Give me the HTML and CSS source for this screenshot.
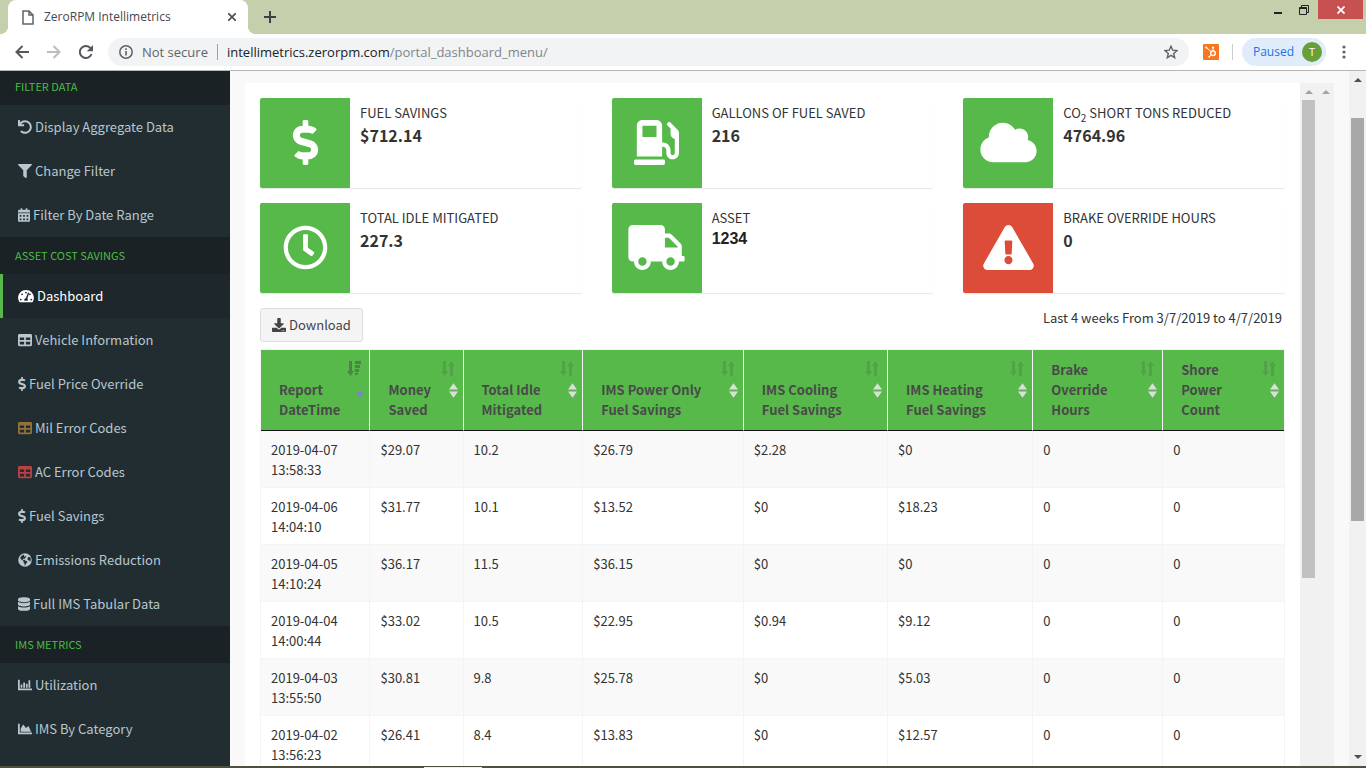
FILE: index.html
```html
<!DOCTYPE html>
<html lang="en">
<head>
<meta charset="utf-8">
<title>ZeroRPM Intellimetrics</title>
<link rel="stylesheet" href="styles.css">
</head>
<body>
<svg class="sprite" aria-hidden="true">
  <symbol id="dollar" viewBox="0 0 288 512"><path d="M209.2 233.4l-108-31.6C88.7 198.2 80 186.5 80 173.5c0-16.3 13.2-29.5 29.5-29.5h66.3c12.2 0 24.2 3.7 34.2 10.5 6.1 4.1 14.3 3.1 19.5-2l34.8-34c7.1-6.9 6.1-18.4-1.8-24.5C238 74.8 207.4 64.1 176 64V16c0-8.8-7.2-16-16-16h-32c-8.8 0-16 7.2-16 16v48h-2.5C45.8 64-5.4 118.7.5 183.6c4.2 46.1 39.4 83.6 83.8 96.6l102.5 30c12.5 3.7 21.2 15.3 21.2 28.3 0 16.3-13.2 29.5-29.5 29.5h-66.3C100 368 88 364.3 78 357.5c-6.1-4.1-14.3-3.1-19.5 2l-34.8 34c-7.1 6.9-6.1 18.4 1.8 24.5 24.5 19.2 55.1 29.9 86.5 30v48c0 8.8 7.2 16 16 16h32c8.8 0 16-7.2 16-16v-48.2c46.6-.9 90.3-28.6 105.7-72.7 21.5-61.6-14.6-124.8-72.5-141.7z"/></symbol>
  <symbol id="pump" viewBox="0 0 512 512"><path d="M336 448H16c-8.8 0-16 7.2-16 16v32c0 8.8 7.2 16 16 16h320c8.8 0 16-7.2 16-16v-32c0-8.8-7.2-16-16-16zm157.2-340.7l-81-81c-6.2-6.2-16.4-6.2-22.6 0l-11.3 11.3c-6.2 6.2-6.2 16.4 0 22.6L416 97.9V160c0 28.1 20.9 51.3 48 55.2V376c0 13.2-10.8 24-24 24s-24-10.8-24-24v-32c0-48.6-39.4-88-88-88h-8V64c0-35.3-28.7-64-64-64H96C60.7 0 32 28.7 32 64v352h288V304h8c22.1 0 40 17.9 40 40v27.8c0 37.7 27 72 64.5 75.9 43 4.3 79.5-29.5 79.5-71.7V152.6c0-17-6.8-33.3-18.8-45.3zM256 192H96V64h160v128z"/></symbol>
  <symbol id="cloud" viewBox="0 0 640 512"><path d="M537.6 226.6c4.1-10.7 6.4-22.4 6.4-34.6 0-53-43-96-96-96-19.7 0-38.1 6-53.3 16.2C367 64.2 315.3 32 256 32c-88.4 0-160 71.6-160 160 0 2.7.1 5.4.2 8.1C40.2 219.8 0 273.2 0 336c0 79.5 64.5 144 144 144h368c70.7 0 128-57.3 128-128 0-61.9-44-113.6-102.4-125.4z"/></symbol>
  <symbol id="clock" viewBox="0 0 512 512"><path d="M256 8C119 8 8 119 8 256s111 248 248 248 248-111 248-248S393 8 256 8zm0 448c-110.5 0-200-89.5-200-200S145.5 56 256 56s200 89.5 200 200-89.5 200-200 200zm61.8-104.4l-84.9-61.7c-3.1-2.3-4.9-5.9-4.9-9.7V116c0-6.6 5.4-12 12-12h32c6.6 0 12 5.4 12 12v141.7l66.8 48.6c5.4 3.9 6.5 11.4 2.6 16.8L334.6 349c-3.9 5.3-11.4 6.5-16.8 2.6z"/></symbol>
  <symbol id="truck" viewBox="0 0 640 512"><path d="M624 352h-16V243.9c0-12.7-5.1-24.9-14.1-33.9L494 110.1c-9-9-21.2-14.1-33.9-14.1H416V48c0-26.5-21.5-48-48-48H48C21.5 0 0 21.5 0 48v320c0 26.5 21.5 48 48 48h16c0 53 43 96 96 96s96-43 96-96h128c0 53 43 96 96 96s96-43 96-96h48c8.8 0 16-7.2 16-16v-32c0-8.8-7.2-16-16-16zM160 464c-26.5 0-48-21.5-48-48s21.5-48 48-48 48 21.5 48 48-21.5 48-48 48zm320 0c-26.5 0-48-21.5-48-48s21.5-48 48-48 48 21.5 48 48-21.5 48-48 48zm80-208H416V144h44.1l99.9 99.9V256z"/></symbol>
  <symbol id="warning" viewBox="0 0 576 512"><path d="M569.517 440.013C587.975 472.007 564.806 512 527.94 512H48.054c-36.937 0-59.999-40.055-41.577-71.987L246.423 23.985c18.467-32.009 64.72-31.951 83.154 0l239.94 416.028zM288 354c-25.405 0-46 20.595-46 46s20.595 46 46 46 46-20.595 46-46-20.595-46-46-46zm-43.673-165.346l7.418 136c.347 6.364 5.609 11.346 11.982 11.346h48.546c6.373 0 11.635-4.982 11.982-11.346l7.418-136c.375-6.874-5.098-12.654-11.982-12.654h-63.383c-6.884 0-12.356 5.78-11.981 12.654z"/></symbol>
  <symbol id="undo" viewBox="0 0 512 512"><path d="M212.333 224.333H12c-6.627 0-12-5.373-12-12V12C0 5.373 5.373 0 12 0h48c6.627 0 12 5.373 12 12v78.112C117.773 39.279 184.26 7.47 258.175 8.007c136.906.994 246.448 111.623 246.157 248.532C504.041 393.258 393.12 504 256.333 504c-64.089 0-122.496-24.313-166.51-64.215-5.099-4.622-5.334-12.554-.467-17.42l33.967-33.967c4.474-4.474 11.662-4.717 16.401-.525C170.76 415.336 211.58 432 256.333 432c97.268 0 176-78.716 176-176 0-97.267-78.716-176-176-176-58.496 0-110.28 28.476-142.274 72.333h98.274c6.627 0 12 5.373 12 12v48c0 6.627-5.373 12-12 12z"/></symbol>
  <symbol id="filter" viewBox="0 0 512 512"><path d="M487.976 0H24.028C2.71 0-8.047 25.866 7.058 40.971L192 225.941V432c0 7.831 3.821 15.17 10.237 19.662l80 55.98C298.02 518.69 320 507.493 320 487.98V225.941l184.947-184.97C520.021 25.896 509.338 0 487.976 0z"/></symbol>
  <symbol id="calendar" viewBox="0 0 448 512"><path fill-rule="evenodd" d="M400 64h-48V16c0-8.800-7.200-16-16-16h-32c-8.800 0-16 7.200-16 16v48H160V16c0-8.800-7.200-16-16-16h-32c-8.800 0-16 7.200-16 16v48H48C21.500 64 0 85.500 0 112v48h448v-48c0-26.500-21.500-48-48-48zM0 192v272c0 26.500 21.500 48 48 48h352c26.500 0 48-21.500 48-48V192zM64 256h64v64H64zM192 256h64v64h-64zM320 256h64v64h-64zM64 384h64v64H64zM192 384h64v64h-64zM320 384h64v64h-64z"/></symbol>
  <symbol id="gauge" viewBox="0 0 576 512"><path fill-rule="evenodd" d="M288 32C128.940 32 0 160.940 0 320c0 52.800 14.250 102.260 39.060 144.800 5.610 9.620 16.300 15.200 27.440 15.200h443c11.140 0 21.830-5.580 27.440-15.200C561.750 422.260 576 372.800 576 320c0-159.060-128.940-288-288-288zM288 96a32 32 0 1 1 0 64 32 32 0 1 1 0-64zM96 352a32 32 0 1 1 0 64 32 32 0 1 1 0-64zM144 160a32 32 0 1 1 0 64 32 32 0 1 1 0-64zM480 352a32 32 0 1 1 0 64 32 32 0 1 1 0-64zM432 160a32 32 0 1 1 0 64 32 32 0 1 1 0-64zM360 130l46 15-68 203c28 24 18 66 6 84H232c-20-40 0-92 50-98z"/></symbol>
  <symbol id="table" viewBox="0 0 512 512"><path d="M464 32H48C21.490 32 0 53.490 0 80v352c0 26.510 21.490 48 48 48h416c26.510 0 48-21.490 48-48V80c0-26.510-21.490-48-48-48zM224 416H64v-96h160v96zm0-160H64v-96h160v96zm224 160H288v-96h160v96zm0-160H288v-96h160v96z"/></symbol>
  <symbol id="globe" viewBox="0 0 512 512"><path fill-rule="evenodd" d="M256 8a248 248 0 1 1 0 496 248 248 0 1 1 0-496zM82 170l34 66 68 40 22 30-8 40 42 40v70l24-4 26-56 48-54-8-40-54-18-48-34-40 4-20-30 50-20 18 22 12-36 58-50-24-34-30 30-34-20 10-30-40-20-60 40zM380 150l-30 40-2 52 40 30 38-2 22 60 20-80-20-100z"/></symbol>
  <symbol id="database" viewBox="0 0 448 512"><path d="M448 73.143v45.714C448 159.143 347.667 192 224 192S0 159.143 0 118.857V73.143C0 32.857 100.333 0 224 0s224 32.857 224 73.143zM448 176v102.857C448 319.143 347.667 352 224 352S0 319.143 0 278.857V176c48.125 33.143 136.208 48.572 224 48.572S399.874 209.143 448 176zm0 160v102.857C448 479.143 347.667 512 224 512S0 479.143 0 438.857V336c48.125 33.143 136.208 48.572 224 48.572S399.874 369.143 448 336z"/></symbol>
  <symbol id="bars" viewBox="0 0 512 512"><path d="M12 64h40q12 0 12 12v308h436q12 0 12 12v40q0 12-12 12H12q-12 0-12-12V76q0-12 12-12zM108 240h40q12 0 12 12v100H96V252q0-12 12-12zM204 160h40q12 0 12 12v180h-64V172q0-12 12-12zM300 208h40q12 0 12 12v132h-64V220q0-12 12-12zM396 80h40q12 0 12 12v260h-64V92q0-12 12-12z"/></symbol>
  <symbol id="area" viewBox="0 0 512 512"><path d="M500 384c6.600 0 12 5.400 12 12v40c0 6.600-5.400 12-12 12H12c-6.600 0-12-5.400-12-12V76c0-6.600 5.400-12 12-12h40c6.600 0 12 5.400 12 12v308h436zM372.700 159.500L288 216l-85.300-113.700c-5.100-6.800-15.500-6.300-19.900 1L96 248v104h384l-89.900-187.800c-3.200-6.500-11.400-8.700-17.400-4.700z"/></symbol>
  <symbol id="download" viewBox="0 0 512 512"><path d="M216 0h80c13.300 0 24 10.700 24 24v168h87.700c17.800 0 26.700 21.500 14.100 34.100L269.700 378.300c-7.500 7.500-19.800 7.500-27.300 0L90.100 226.100c-12.600-12.600-3.700-34.100 14.100-34.100H192V24c0-13.300 10.700-24 24-24zm296 376v112c0 13.300-10.700 24-24 24H24c-13.300 0-24-10.700-24-24V376c0-13.300 10.700-24 24-24h146.700l49 49c20.100 20.100 52.500 20.100 72.600 0l49-49H488c13.300 0 24 10.700 24 24zm-124 88c0-11-9-20-20-20s-20 9-20 20 9 20 20 20 20-9 20-20zm64 0c0-11-9-20-20-20s-20 9-20 20 9 20 20 20 20-9 20-20z"/></symbol>
  <symbol id="sort" viewBox="0 0 14 15"><path d="M2 0h3v10h2l-3.500 5L0 10h2zM9 15h3V5h2l-3.500-5L7 5h2z"/></symbol>
  <symbol id="sorted" viewBox="0 0 14 15"><path d="M2 0h3v10h2l-3.500 5L0 10h2zM8 0h6v3H8zM8 4h5v3H8zM8 8h4v3H8zM8 12h3v2H8z"/></symbol>
  <symbol id="both" viewBox="0 0 10 16"><path d="M5 0l5 7H0zM0 9h10l-5 7z"/></symbol>
</svg>

<div class="window">
  <header class="tabstrip">
    <div class="tab">
      <svg class="page-icon" viewBox="0 0 12 15"><path d="M1 1h6l4 4v9H1zM7 1v4h4" fill="none" stroke="#5f6368" stroke-width="1.500"/></svg>
      <span class="tab-title">ZeroRPM Intellimetrics</span>
      <button class="plain" aria-label="Close tab"><svg class="tab-close" viewBox="0 0 8 8"><path d="M0 0l8 8M8 0L0 8" stroke="#4a4d51" stroke-width="1.600"/></svg></button>
    </div>
    <button class="plain new-tab" aria-label="New tab"><svg width="12" height="12" viewBox="0 0 12 12"><path d="M6 0v12M0 6h12" stroke="#3c4043" stroke-width="2"/></svg></button>
    <div class="window-buttons">
      <button class="plain" aria-label="Minimize"><svg width="10" height="12" viewBox="0 0 10 12"><path d="M1 8h8v2H1z" fill="#222"/></svg></button>
      <button class="plain" aria-label="Restore"><svg width="10" height="10" viewBox="0 0 10 10"><path d="M.5 2.500h7v7h-7zM.5 3.500h7M2.500 2V.5h7v7H8" fill="none" stroke="#222"/></svg></button>
      <button class="plain close" aria-label="Close"><svg width="8" height="8" viewBox="0 0 8 8"><path d="M.5 .5l7 7M7.500 .5l-7 7" stroke="#fff" stroke-width="1.800"/></svg></button>
    </div>
  </header>

  <div class="toolbar">
    <button class="plain" aria-label="Back"><svg width="14" height="14" viewBox="0 0 14 14"><path d="M14 7H1.500M7.500 1L1.500 7l6 6" fill="none" stroke="#55585d" stroke-width="2"/></svg></button>
    <button class="plain" aria-label="Forward"><svg width="14" height="14" viewBox="0 0 14 14"><path d="M0 7h12.500M6.500 1l6 6-6 6" fill="none" stroke="#bbbdbf" stroke-width="2"/></svg></button>
    <button class="plain" aria-label="Reload"><svg width="14" height="14" viewBox="0 0 14 14"><path d="M12.500 9A6 6 0 1 1 11.500 3.200" fill="none" stroke="#55585d" stroke-width="2"/><path d="M14 0v6.200H7.800z" fill="#55585d"/></svg></button>
    <div class="address">
      <svg width="14" height="14" viewBox="0 0 14 14"><circle cx="7" cy="7" r="6.200" fill="none" stroke="#5f6368" stroke-width="1.500"/><path d="M6.200 6h1.600v4.500H6.200zM6.200 3.300h1.600v1.600H6.200z" fill="#5f6368"/></svg>
      <span class="security">Not secure</span>
      <span class="url"><b>intellimetrics.zerorpm.com</b>/portal_dashboard_menu/</span>
      <button class="plain" aria-label="Bookmark"><svg width="14" height="14" viewBox="0 0 14 14"><path d="M7 1.200l1.700 4 4.300.4-3.300 2.800 1 4.300L7 10.400l-3.700 2.300 1-4.300L1 5.600l4.300-.4z" fill="none" stroke="#5f6368" stroke-width="1.400"/></svg></button>
    </div>
    <svg class="extension" viewBox="0 0 16 16"><rect width="16" height="16" rx="1" fill="#f8761f"/><circle cx="10" cy="9.200" r="2.300" fill="none" stroke="#fff" stroke-width="1.500"/><path d="M10 7V4M8.300 7.700L3.300 3.500M8.300 10.800L6.500 12.600" stroke="#fff"/><circle cx="10" cy="3.500" r="1.100" fill="#fff"/><circle cx="3.300" cy="3.500" r="1.100" fill="#fff"/><circle cx="6.300" cy="12.800" r="1" fill="#fff"/></svg>
    <span class="divider"></span>
    <button class="profile">Paused <span class="avatar">T</span></button>
    <button class="plain menu" aria-label="Menu"><svg width="4" height="14" viewBox="0 0 4 14"><g fill="#5f6368"><circle cx="2" cy="2" r="1.600"/><circle cx="2" cy="7" r="1.600"/><circle cx="2" cy="12" r="1.600"/></g></svg></button>
  </div>

  <div class="app">
    <nav class="sidebar">
      <h2 class="first">FILTER DATA</h2>
      <a href="#"><svg class="w14"><use href="#undo"/></svg>Display Aggregate Data</a>
      <a href="#"><svg class="w14"><use href="#filter"/></svg>Change Filter</a>
      <a href="#"><svg class="w12"><use href="#calendar"/></svg>Filter By Date Range</a>
      <h2>ASSET COST SAVINGS</h2>
      <a href="#" class="active"><svg class="w16"><use href="#gauge"/></svg>Dashboard</a>
      <a href="#"><svg class="w14"><use href="#table"/></svg>Vehicle Information</a>
      <a href="#"><svg class="w8"><use href="#dollar"/></svg>Fuel Price Override</a>
      <a href="#"><svg class="w14 amber"><use href="#table"/></svg>Mil Error Codes</a>
      <a href="#"><svg class="w14 red"><use href="#table"/></svg>AC Error Codes</a>
      <a href="#"><svg class="w8"><use href="#dollar"/></svg>Fuel Savings</a>
      <a href="#"><svg class="w14"><use href="#globe"/></svg>Emissions Reduction</a>
      <a href="#"><svg class="w12"><use href="#database"/></svg>Full IMS Tabular Data</a>
      <h2>IMS METRICS</h2>
      <a href="#"><svg class="w14"><use href="#bars"/></svg>Utilization</a>
      <a href="#"><svg class="w14"><use href="#area"/></svg>IMS By Category</a>
    </nav>

    <main class="content">
      <section class="panel">
        <div class="cards">
          <article class="card"><div class="card-icon"><svg><use href="#dollar"/></svg></div><div class="card-text"><h3>FUEL SAVINGS</h3><strong>$712.14</strong></div></article>
          <article class="card"><div class="card-icon"><svg><use href="#pump"/></svg></div><div class="card-text"><h3>GALLONS OF FUEL SAVED</h3><strong>216</strong></div></article>
          <article class="card"><div class="card-icon"><svg><use href="#cloud"/></svg></div><div class="card-text"><h3>CO<sub>2</sub> SHORT TONS REDUCED</h3><strong>4764.96</strong></div></article>
          <article class="card"><div class="card-icon"><svg><use href="#clock"/></svg></div><div class="card-text"><h3>TOTAL IDLE MITIGATED</h3><strong>227.3</strong></div></article>
          <article class="card"><div class="card-icon"><svg><use href="#truck"/></svg></div><div class="card-text"><h3>ASSET</h3><strong class="asset">1234</strong></div></article>
          <article class="card"><div class="card-icon alert"><svg><use href="#warning"/></svg></div><div class="card-text"><h3>BRAKE OVERRIDE HOURS</h3><strong>0</strong></div></article>
        </div>
        <div class="actions">
          <button class="download"><svg><use href="#download"/></svg>Download</button>
          <p>Last 4 weeks From 3/7/2019 to 4/7/2019</p>
        </div>
        <table>
          <colgroup><col class="c1"><col class="c2"><col class="c3"><col class="c4"><col class="c5"><col class="c6"><col class="c7"><col></colgroup>
          <thead>
            <tr>
              <th>Report<br>DateTime<svg class="sort on"><use href="#sorted"/></svg><i class="desc"></i></th>
              <th>Money<br>Saved<svg class="sort"><use href="#sort"/></svg><svg class="both"><use href="#both"/></svg></th>
              <th>Total Idle<br>Mitigated<svg class="sort"><use href="#sort"/></svg><svg class="both"><use href="#both"/></svg></th>
              <th>IMS Power Only<br>Fuel Savings<svg class="sort"><use href="#sort"/></svg><svg class="both"><use href="#both"/></svg></th>
              <th>IMS Cooling<br>Fuel Savings<svg class="sort"><use href="#sort"/></svg><svg class="both"><use href="#both"/></svg></th>
              <th>IMS Heating<br>Fuel Savings<svg class="sort"><use href="#sort"/></svg><svg class="both"><use href="#both"/></svg></th>
              <th>Brake<br>Override<br>Hours<svg class="sort"><use href="#sort"/></svg><svg class="both"><use href="#both"/></svg></th>
              <th>Shore<br>Power<br>Count<svg class="sort"><use href="#sort"/></svg><svg class="both"><use href="#both"/></svg></th>
            </tr>
          </thead>
          <tbody>
            <tr><td>2019-04-07<br>13:58:33</td><td>$29.07</td><td>10.2</td><td>$26.79</td><td>$2.28</td><td>$0</td><td>0</td><td>0</td></tr>
            <tr><td>2019-04-06<br>14:04:10</td><td>$31.77</td><td>10.1</td><td>$13.52</td><td>$0</td><td>$18.23</td><td>0</td><td>0</td></tr>
            <tr><td>2019-04-05<br>14:10:24</td><td>$36.17</td><td>11.5</td><td>$36.15</td><td>$0</td><td>$0</td><td>0</td><td>0</td></tr>
            <tr><td>2019-04-04<br>14:00:44</td><td>$33.02</td><td>10.5</td><td>$22.95</td><td>$0.94</td><td>$9.12</td><td>0</td><td>0</td></tr>
            <tr><td>2019-04-03<br>13:55:50</td><td>$30.81</td><td>9.8</td><td>$25.78</td><td>$0</td><td>$5.03</td><td>0</td><td>0</td></tr>
            <tr><td>2019-04-02<br>13:56:23</td><td>$26.41</td><td>8.4</td><td>$13.83</td><td>$0</td><td>$12.57</td><td>0</td><td>0</td></tr>
          </tbody>
        </table>
      </section>
      <div class="track inner"><i class="arrow up"></i><i class="thumb"></i></div>
      <div class="track"><i class="arrow up"></i></div>
    </main>
    <div class="track page"><i class="arrow up"></i><i class="thumb"></i><i class="arrow down"></i></div>
  </div>
  <footer class="taskbar"><span></span></footer>
</div>
</body>
</html>
```
FILE: styles.css
```css
* { box-sizing: border-box; }

body {
  margin: 0;
  font-family: "Noto Sans CJK SC", "Open Sans", sans-serif;
  font-size: 13px;
  line-height: 20px;
  color: #333;
}

svg { display: block; flex: none; fill: currentColor; }
.sprite { display: none; }
h2, h3, p { margin: 0; font-weight: 400; }
button { font: inherit; cursor: pointer; }
.plain {
  display: flex;
  align-items: center;
  justify-content: center;
  padding: 0;
  border: 0;
  background: none;
}

.window { display: flex; flex-direction: column; height: 100vh; overflow: hidden; }

/* Browser tabs */
.tabstrip {
  display: flex;
  flex: none;
  height: 34px;
  padding-left: 8px;
  background: #c4d0ab;
  font-family: "Open Sans", sans-serif;
  font-size: 12px;
}
.tab {
  position: relative;
  display: flex;
  align-items: center;
  gap: 10px;
  width: 240px;
  padding: 0 12px 0 14px;
  border-radius: 8px 8px 0 0;
  background: #fff;
}
.tab::before, .tab::after {
  content: "";
  position: absolute;
  bottom: 0;
  width: 8px;
  height: 8px;
}
.tab::before { left: -8px; background: radial-gradient(circle at 0 0, #c4d0ab 8px, #fff 8px); }
.tab::after { right: -8px; background: radial-gradient(circle at 100% 0, #c4d0ab 8px, #fff 8px); }
.page-icon { width: 12px; height: 15px; }
.tab-title { flex: 1; color: #45484c; white-space: nowrap; }
.tab-close { width: 8px; height: 8px; }
.new-tab { margin-left: 16px; }
.window-buttons {
  display: flex;
  align-items: flex-start;
  gap: 16px;
  margin-left: auto;
  padding-right: 3px;
}
.window-buttons .plain { height: 19px; }
.window-buttons .close { width: 45px; margin-left: -7px; background: #c75050; }

/* Address row */
.toolbar {
  display: flex;
  flex: none;
  align-items: center;
  gap: 18px;
  height: 37px;
  padding: 0 20px 0 15px;
  border-bottom: 1px solid #b5b5b5;
  background: #fff;
  font-family: "Open Sans", sans-serif;
}
.address {
  display: flex;
  flex: 1;
  align-items: center;
  height: 28px;
  margin-right: -4px;
  margin-left: -3px;
  padding: 0 11px;
  border-radius: 14px;
  background: #f1f3f4;
}
.security {
  margin-left: 9px;
  padding-right: 9px;
  border-right: 1px solid #9aa0a6;
  line-height: 16px;
  color: #5f6368;
}
.url { flex: 1; margin-left: 9px; color: #80868b; }
.url b { font-weight: 400; color: #202124; }
.extension { width: 16px; height: 16px; }
.divider { width: 1px; height: 16px; margin: 0 -9px 0 -5px; background: #ccc; }
.profile {
  display: flex;
  align-items: center;
  gap: 8px;
  height: 28px;
  padding: 0 4px 0 11px;
  border: 0;
  border-radius: 14px;
  background: #e1ecfb;
  color: #1a73e8;
  font-size: 12px;
}
.avatar {
  width: 20px;
  height: 20px;
  border-radius: 50%;
  background: #689f38;
  color: #fff;
  font-size: 11px;
}
.menu { width: 4px; margin-left: -2px; }

/* Page body */
.app { display: flex; flex: 1; min-height: 0; background: #f9f9f9; }

.sidebar { flex: none; width: 230px; overflow: hidden; background: #222d32; }
.sidebar h2 {
  height: 37px;
  padding-left: 15px;
  background: #1a2226;
  color: #4bbd43;
  font-size: 11px;
  line-height: 37px;
}
.sidebar h2.first { height: 34px; line-height: 31px; }
.sidebar a {
  display: flex;
  align-items: center;
  gap: 3px;
  height: 44px;
  padding-left: 15px;
  border-left: 3px solid transparent;
  color: #b8c7ce;
  text-decoration: none;
}
.sidebar svg { height: 14px; }
.sidebar .active { border-color: #56b949; background: #1e282c; color: #fff; }
.w8 { width: 8px; }
.w12 { width: 12px; }
.w14 { width: 14px; }
.w16 { width: 16px; }
.sidebar .amber { color: #94703a; }
.sidebar .red { color: #b94141; }

.content { display: flex; flex: 1; min-width: 0; padding: 12px 15px 0; }
.panel { flex: 1; min-width: 0; padding: 15px 15px 0; overflow: hidden; background: #fff; }

.cards { display: grid; grid-template-columns: repeat(3, 1fr); gap: 15px 30px; }
.card {
  display: flex;
  min-height: 90px;
  border-radius: 2px;
  box-shadow: 0 1px 1px rgba(0, 0, 0, 0.1);
}
.card-icon {
  display: flex;
  align-items: center;
  justify-content: center;
  width: 90px;
  padding-bottom: 2px;
  border-radius: 2px 0 0 2px;
  background: #56b949;
  color: #fff;
}
.card-icon.alert { background: #dd4b39; }
.card-icon svg { width: 57px; height: 45px; }
.card-text { padding: 5px 10px; }
.card-text h3 { font-size: 13px; line-height: 20px; }
.card-text sub { font-size: 10px; line-height: 0; }
.card-text strong { display: block; font-size: 16px; line-height: 24px; }
.card-text .asset { font-family: "Liberation Sans", sans-serif; line-height: 22px; color: #222; }

.actions { display: flex; justify-content: space-between; margin: 15px 0 7px; }
.actions p { padding-right: 3px; }
.download {
  display: flex;
  align-items: center;
  gap: 3px;
  height: 34px;
  padding: 0 11px;
  border: 1px solid #ddd;
  border-radius: 3px;
  background: #f4f4f4;
  color: #444;
}
.download svg { width: 14px; height: 14px; }

table {
  width: 100%;
  border: 1px solid #f4f4f4;
  border-collapse: separate;
  border-spacing: 0;
  table-layout: fixed;
}
.c1 { width: 10.7%; }
.c2 { width: 9.1%; }
.c3 { width: 11.7%; }
.c4 { width: 15.7%; }
.c5 { width: 14.1%; }
.c6 { width: 14.2%; }
.c7 { width: 12.7%; }
th {
  position: relative;
  padding: 10px 18px;
  border-right: 1px solid #f4f4f4;
  border-bottom: 1px solid #111;
  background: #56b949;
  color: #4a4a4a;
  text-align: left;
  vertical-align: bottom;
  white-space: nowrap;
}
td {
  padding: 9px 10px 7px;
  border-right: 1px solid #f4f4f4;
  border-bottom: 1px solid #f4f4f4;
  vertical-align: top;
}
th:last-child, td:last-child { border-right: 0; }
tbody tr:nth-child(odd) { background: #f9f9f9; }
.sort { position: absolute; top: 11px; right: 8px; width: 14px; height: 15px; opacity: 0.2; }
.sort.on { opacity: 0.5; }
.both { position: absolute; top: 33px; right: 5px; width: 9px; height: 15px; color: #ddd; }
.desc {
  position: absolute;
  top: 41px;
  right: 5px;
  border: solid transparent;
  border-width: 7px 4px 0;
  border-top-color: #7b86d2;
}

/* Scroll tracks */
.track {
  display: flex;
  flex: none;
  flex-direction: column;
  align-items: center;
  width: 17px;
  background: #f1f1f1;
  color: #a3a3a3;
}
.arrow { margin: 7px 0 6px; border: 4px solid transparent; border-top: 0; border-bottom-color: currentColor; }
.arrow.down { margin: auto 0 7px; border-top: 4px solid currentColor; border-bottom: 0; }
.thumb { width: 13px; height: 70%; background: #c1c1c1; }
.page { color: #505050; }
.page .thumb { height: 58%; margin-top: 30px; background: #a8a8a8; }

.taskbar { flex: none; height: 2px; padding: 1px 0 0 424px; background: #4f5040; }
.taskbar span { display: block; width: 58px; height: 1px; background: #eee; }
```
